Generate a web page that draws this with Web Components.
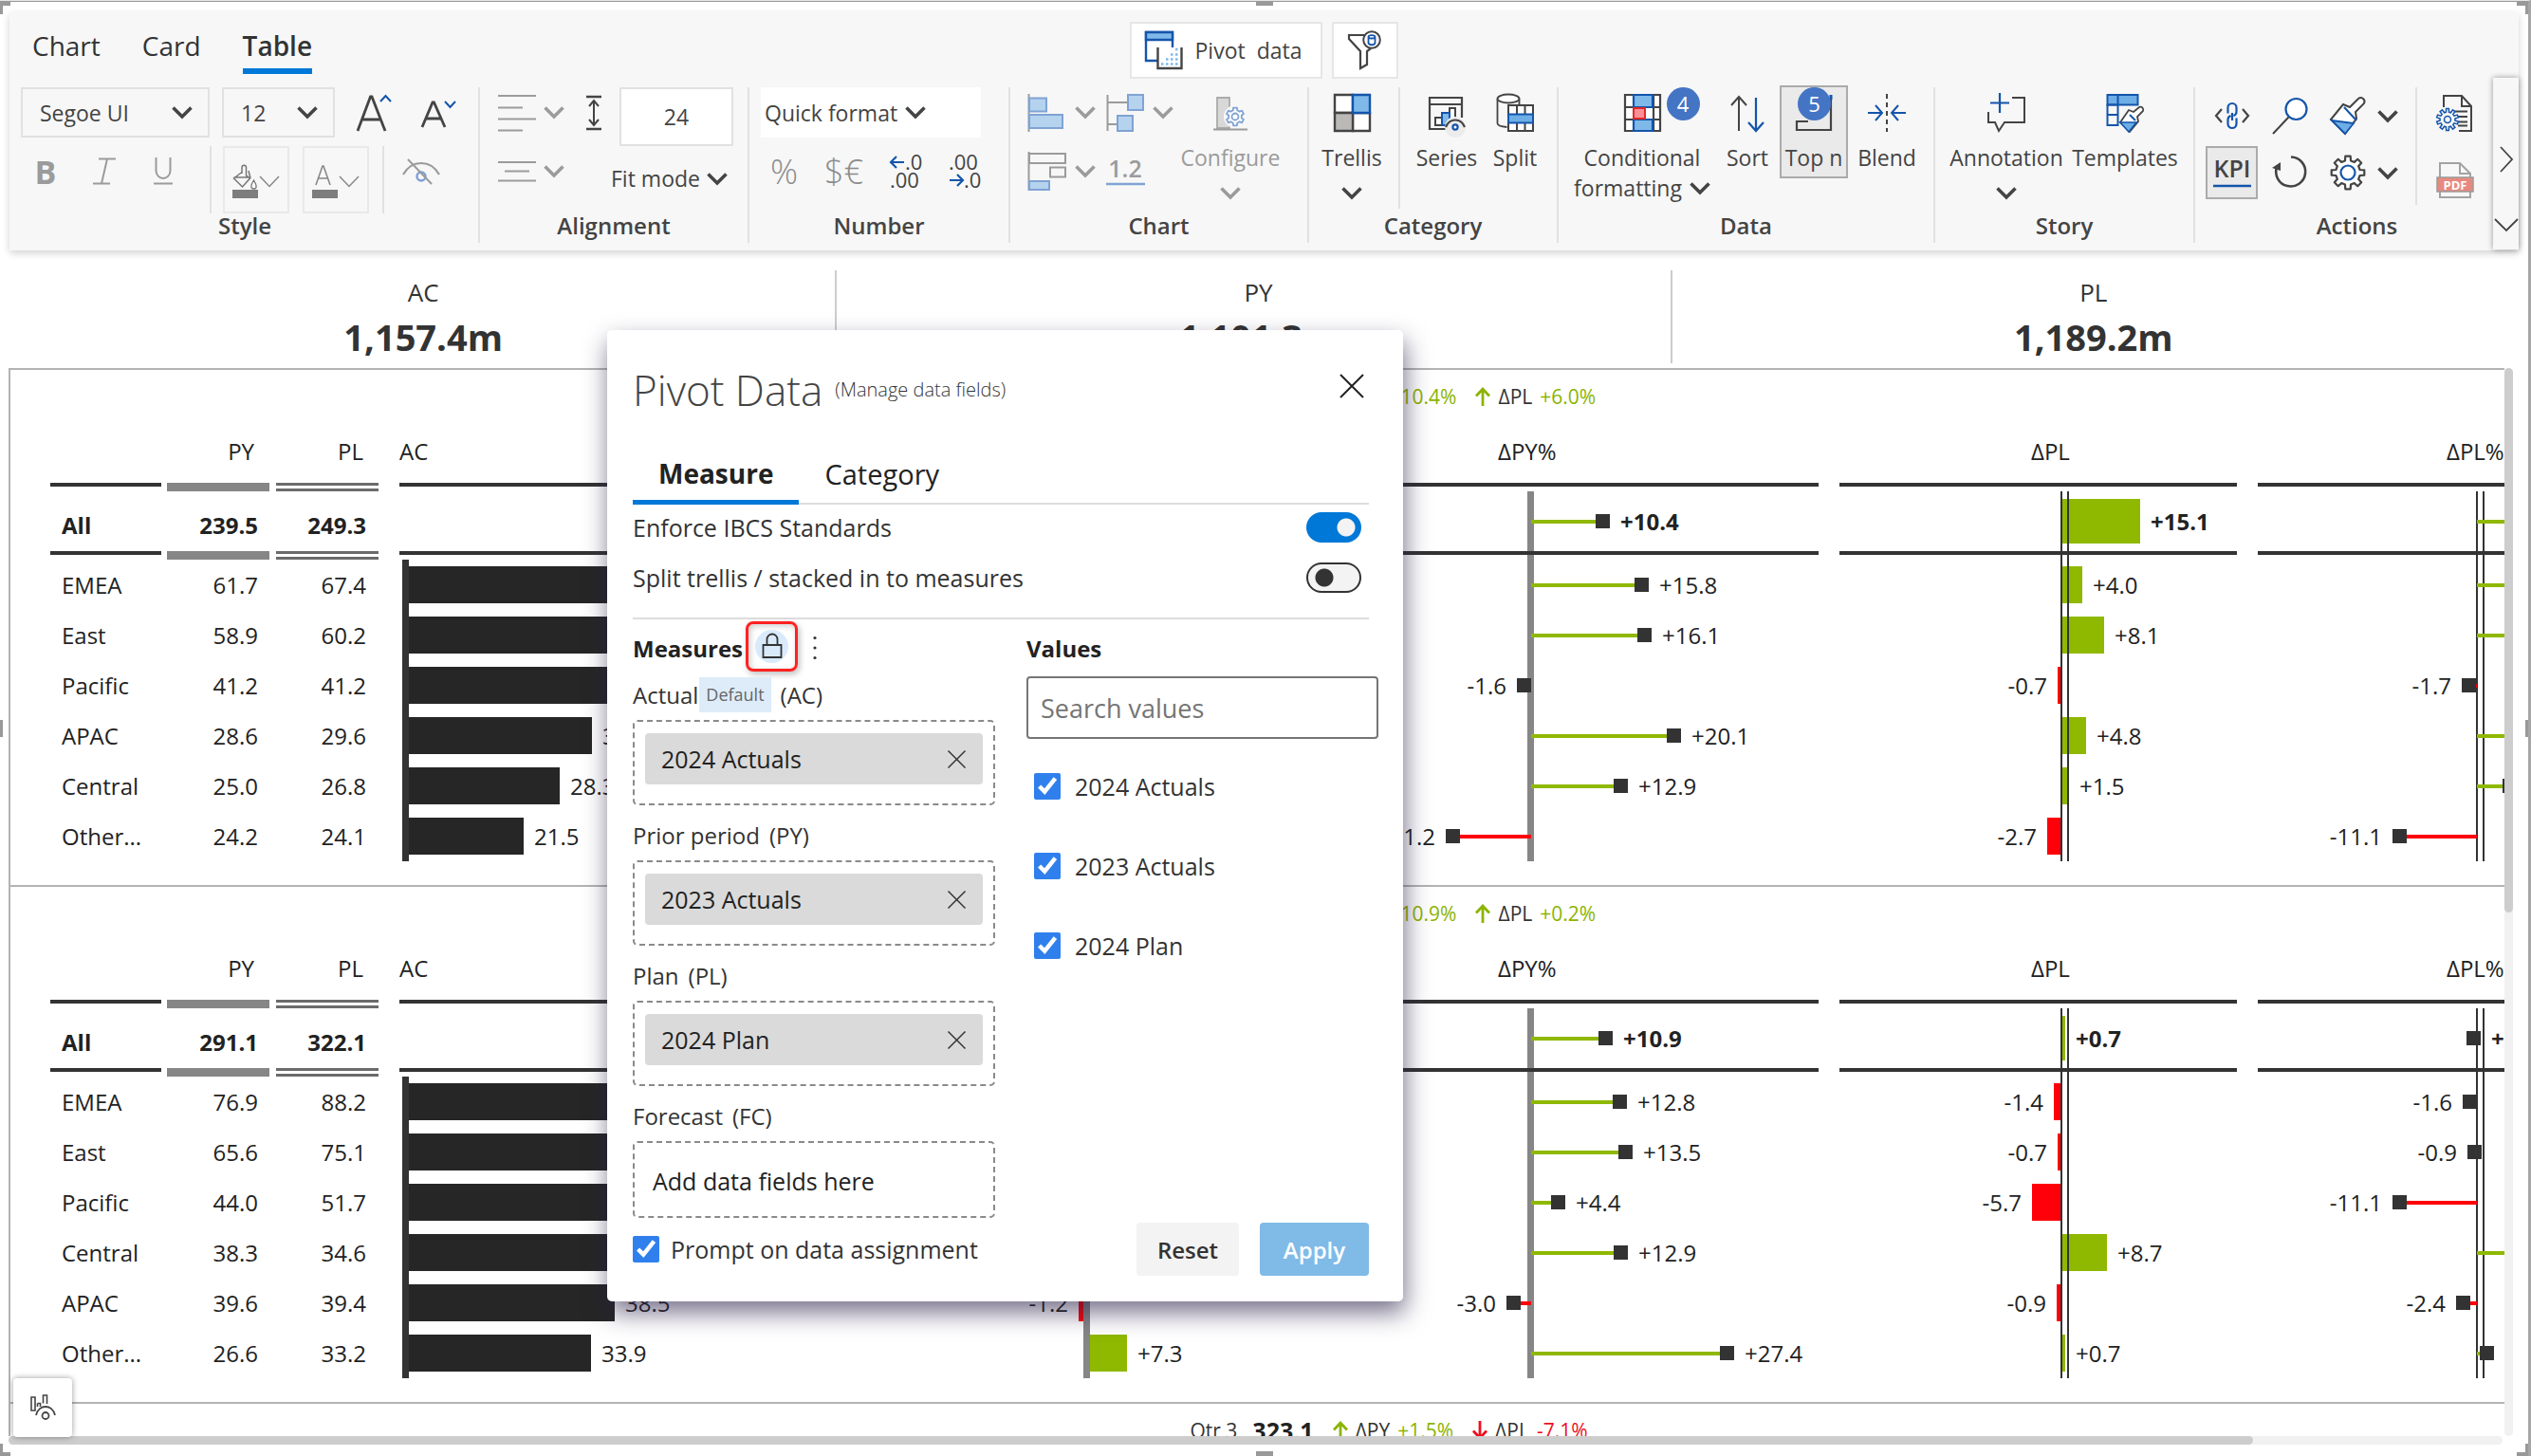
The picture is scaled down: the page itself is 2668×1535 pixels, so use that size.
<!DOCTYPE html>
<html lang="en">
<head>
<meta charset="utf-8">
<title>Pivot Data</title>
<style>
html, body { margin: 0; height: 100%; background: #fff; overflow: hidden; }
body { font-family: "Open Sans", "Noto Sans", sans-serif; font-size: 23px; color: #444; }
</style>
</head>
<body>
<report-app></report-app>
<script>
const BASE = `
*,*::before,*::after{box-sizing:border-box}
:host{box-sizing:border-box;display:block}
:host([hidden]){display:none}
button,input,select{font:inherit;color:inherit;margin:0;padding:0;border:0;background:none;border-radius:0}
button{cursor:pointer}
`;
function define(name, css, html, setup) {
  const tpl = document.createElement('template');
  if (typeof html === 'string') tpl.innerHTML = `<style>${BASE}${css}</style>${html}`;
  customElements.define(name, class extends HTMLElement {
    connectedCallback() {
      if (this.shadowRoot) return;
      const root = this.attachShadow({ mode: 'open' });
      if (typeof html === 'function') root.innerHTML = `<style>${BASE}${css}</style>${html(this)}`;
      else root.append(tpl.content.cloneNode(true));
      if (setup) setup(this, root);
    }
  });
}

/* ---------- icons ---------- */
const D = '#444', B = '#1455ab', L = '#7fb9ea', G = '#9b9b9b', P = '#b5d3ef', Q = '#7fa3d3';
const gear = (cx, cy, r, R, n) => {
  let d = '';
  for (let i = 0; i < n; i++) {
    const s = Math.PI * 2 / n, a = i * s - Math.PI / 2;
    [[r, -.3], [R, -.2], [R, .2], [r, .3]].forEach(([q, o], k) => {
      d += (i || k ? 'L' : 'M') + (cx + q * Math.cos(a + o * s)).toFixed(1) + ' ' + (cy + q * Math.sin(a + o * s)).toFixed(1);
    });
  }
  return d + 'Z';
};
const ICONS = {
  chev: [22, 13, `<path d="M1.500 1.500 11 11 20.500 1.500" fill="none" stroke="currentColor" stroke-width="3.600"/>`],
  thin: [22, 13, `<path d="M1 1 11 11.500 21 1" fill="none" stroke="currentColor" stroke-width="1.500"/>`],
  right: [14, 28, `<path d="M1 1 13 14 1 27" fill="none" stroke="#444" stroke-width="1.800"/>`],
  down: [26, 14, `<path d="M1 1 13 13 25 1" fill="none" stroke="#444" stroke-width="1.800"/>`],
  grow: [38, 40, `<path d="M2 39 15.500 3h1.500L31 39M7 27h19" fill="none" stroke="${D}" stroke-width="2.800"/><path d="M26 8l5.500-6L37 8" fill="none" stroke="${B}" stroke-width="2"/>`],
  shrink: [38, 32, `<path d="M2 31 13 5h1.500L26 31M6 22h16" fill="none" stroke="${D}" stroke-width="2.800"/><path d="M26 4l5.500 6L37 4" fill="none" stroke="${B}" stroke-width="2"/>`],
  italic: [24, 29, `<path d="M6 1.500h18M0 27.500h18M15 1.500 9 27.500" fill="none" stroke="${G}" stroke-width="2"/>`],
  under: [22, 29, `<path d="M3.500 0v14a7.500 8 0 0 0 15 0V0M1 27.500h20" fill="none" stroke="${G}" stroke-width="2"/>`],
  fill: [28, 36, `<path d="M10 10V3.500a2 2 0 0 1 4.500 0V12l4 3-8 9-9-9 8.500-6.500M1.500 14h17M17 7l2 8" fill="none" stroke="#777" stroke-width="1.500"/><path d="M22.500 17c-3 5-4 9 0 9s3-4 0-9z" fill="#fff" stroke="#777" stroke-width="1.300"/><path d="M0 27h27v9H0z" fill="#7d7d7d"/>`],
  color: [28, 36, `<path d="M4 22 11 2h1l7 20M7 15h9.500" fill="none" stroke="#888" stroke-width="1.600"/><path d="M0 27h27v9H0z" fill="#7d7d7d"/>`],
  eye: [40, 28, `<path d="M1 17C10 1 30 1 39 17" fill="none" stroke="${G}" stroke-width="2.200"/><circle cx="20" cy="19" r="4.500" fill="none" stroke="#7ba0d8" stroke-width="2.400"/><path d="M6 1 31 27" stroke="${G}" stroke-width="2"/>`],
  alignL: [40, 40, `<path d="M0 2h40M0 14.500h26M0 26.500h40M0 38.500h26" stroke="${G}" stroke-width="2.200"/>`],
  alignM: [40, 24, `<path d="M0 2h40M7 11.500h26M0 21.500h40" stroke="${G}" stroke-width="2.200"/>`],
  height: [18, 38, `<path d="M1 2h16M1 36h16" stroke="${D}" stroke-width="2.400"/><path d="M9 6v26M4 12l5-6 5 6M4 26l5 6 5-6" fill="none" stroke="${D}" stroke-width="2"/>`],
  dec1: [34, 38, `<path d="M1 9h14M7 3 1 9l6 6" fill="none" stroke="${B}" stroke-width="2.200"/><text x="16" y="17" font-size="22" font-weight="500" fill="${D}">.0</text><text x="0" y="36" font-size="22" font-weight="500" fill="${D}">.00</text>`],
  dec2: [34, 38, `<path d="M1 28h14M9 22l6 6-6 6" fill="none" stroke="${B}" stroke-width="2.200"/><text x="0" y="17" font-size="22" font-weight="500" fill="${D}">.00</text><text x="16" y="36" font-size="22" font-weight="500" fill="${D}">.0</text>`],
  bars: [40, 40, `<path d="M1.500 0v40" stroke="${G}" stroke-width="2"/><path d="M2 4.500h18v14H2zM2 22h35v14H2z" fill="${P}" stroke="${Q}" stroke-width="2"/>`],
  vari: [41, 40, `<path d="M1.500 1v38M2 9h21M2 32h10" stroke="${G}" stroke-width="2"/><path d="M23 1h16v16H23zM12 23h16v16H12z" fill="${P}" stroke="${Q}" stroke-width="2"/>`],
  stack: [42, 42, `<path d="M1.500 0v41" stroke="${G}" stroke-width="2"/><path d="M2 2h38v10H2zM24 16.500h16v10H24z" fill="none" stroke="${G}" stroke-width="2"/><path d="M2 31h21v9H2z" fill="${P}" stroke="${Q}" stroke-width="2"/>`],
  onetwo: [41, 32, `<text x="20" y="22" font-size="25" font-weight="600" text-anchor="middle" fill="${G}">1.2</text><path d="M0 29h41" stroke="${Q}" stroke-width="2.400"/>`],
  config: [36, 38, `<path d="M4 3h13v32H4z" fill="#d8d8d8" stroke="#aaa" stroke-width="1.800"/><path d="M0 36.500h36" stroke="${G}" stroke-width="1.800"/><circle cx="23" cy="23" r="12" fill="#f7f7f7"/><path d="${gear(23, 23, 7, 9.500, 6)}" fill="#fff" stroke="${Q}" stroke-width="1.800" stroke-linejoin="round"/><circle cx="23" cy="23" r="3.500" fill="none" stroke="${Q}" stroke-width="1.800"/>`],
  trellis: [41, 42, `<path d="M2 2h19v19H2zM21 21h18v19H21z" fill="#fff" stroke="#444" stroke-width="2.400"/><path d="M2 21h19v19H2z" fill="#bab9b6" stroke="#444" stroke-width="2.400"/><path d="M21 2h18v19H21z" fill="${L}" stroke="${B}" stroke-width="2.400"/>`],
  series: [39, 40, `<path d="M35 25V4H1v33h18M1 11h34" fill="none" stroke="${D}" stroke-width="2.200"/><path d="M7 25h7v8H7zM22 15h6v15h-6z" fill="#fff" stroke="${D}" stroke-width="2"/><path d="M14 20h8v13h-8z" fill="${L}" stroke="${B}" stroke-width="2"/><circle cx="28" cy="35" r="11" fill="#ececec"/><path d="M18 35c4-10 16-10 20 0" fill="none" stroke="${D}" stroke-width="2.200"/><circle cx="28" cy="35" r="2.600" fill="#fff" stroke="${B}" stroke-width="2.200"/>`],
  split: [40, 42, `<ellipse cx="13" cy="6" rx="11.500" ry="4.500" fill="#fff" stroke="${D}" stroke-width="1.800"/><path d="M1.500 6v26c0 2 4 3.500 10 4M24.500 6v7" fill="none" stroke="${D}" stroke-width="1.800"/><path d="M13 13h26v27H13zM22 13v27M30.500 13v27" fill="#fff" stroke="${D}" stroke-width="2"/><path d="M13 22.500h26v9H13z" fill="#6daee6" stroke="${B}" stroke-width="2"/>`],
  cond: [41, 42, `<path d="M2 2h37v38H2zM2 15h37M2 28h37M32 2v38" fill="#fff" stroke="${D}" stroke-width="2.200"/><path d="M11 2h20v13H11zM11 28h20v12H11z" fill="${L}" stroke="${B}" stroke-width="2.200"/><path d="M11 16h12v11H11z" fill="#ff8f96" stroke="#e02828" stroke-width="2"/>`],
  sort: [36, 42, `<path d="M9 40V5M1 13l8-9 8 9" fill="none" stroke="${D}" stroke-width="2"/><path d="M27 5v35M19 31l8 9 8-9" fill="none" stroke="${B}" stroke-width="2.200"/>`],
  topn: [40, 42, `<path d="M38 6v33H2V30h12" fill="none" stroke="${D}" stroke-width="2.200"/><path d="M38 2v5" stroke="${B}" stroke-width="3"/>`],
  blend: [40, 42, `<path d="M20 1v40" stroke="${D}" stroke-width="2" stroke-dasharray="5 4"/><path d="M0 21h15M8 13l7 8-7 8M40 21H25M32 13l-7 8 7 8" fill="none" stroke="${B}" stroke-width="2"/>`],
  annot: [41, 42, `<path d="M26 5h13v26H18l-6 9-4-9H1V20" fill="none" stroke="${D}" stroke-width="2"/><path d="M13 0v21M3 10.500h20" stroke="${B}" stroke-width="2.200"/>`],
  templ: [40, 42, `<path d="M1.500 2h32v10.500h-32z" fill="#6daee6" stroke="${B}" stroke-width="2"/><path d="M1.500 12.500h11V34h-11zM1.500 23h11M12.500 2v11" fill="none" stroke="${B}" stroke-width="2"/><path d="M15 31 24 18l5 2 6-5a3 3 0 0 1 4 4l-6 6 1 5-9 11z" fill="#fff" stroke="${D}" stroke-width="1.800"/><path d="M15 31h17l-8 10z" fill="#6daee6" stroke="${B}" stroke-width="1.600"/><path d="M25 23l6 6" stroke="${B}" stroke-width="2"/>`],
  link: [38, 30, `<path d="M8 8 2 15l6 7M30 8l6 7-6 7" fill="none" stroke="${D}" stroke-width="2.200"/><path d="M19 20v-8M14.500 12.500V6.500a4.500 4.500 0 0 1 9 0v4.500a4.500 4.500 0 0 1-3 4M23.500 17.500v6a4.500 4.500 0 0 1-9 0V19a4.500 4.500 0 0 1 3-4" fill="none" stroke="${B}" stroke-width="2.200"/>`],
  search: [38, 40, `<circle cx="25.500" cy="13" r="11" fill="#fff" stroke="${B}" stroke-width="2.200"/><path d="M17.500 21.500 1 39" stroke="${D}" stroke-width="2"/>`],
  brush: [38, 40, `<path d="M1 24 14 8l7 3 9-9a4 4 0 0 1 6 5l-9 9 1 7-12 16z" fill="#fff" stroke="${D}" stroke-width="2"/><path d="M2 25l23 3-9 11z" fill="#6daee6" stroke="${B}" stroke-width="1.800"/><path d="M15 11l13 14" stroke="${B}" stroke-width="2"/>`],
  kpi: [42, 34, `<text x="21" y="22" font-size="25" font-weight="600" text-anchor="middle" fill="${D}">KPI</text><path d="M1 31h40" stroke="${B}" stroke-width="2.400"/>`],
  refresh: [38, 38, `<path d="M20 2.500A15.500 15.500 0 1 1 5 13" fill="none" stroke="${D}" stroke-width="2.600"/><path d="M0 14 9 8v9z" fill="${D}"/>`],
  gear: [38, 38, `<path d="${gear(19, 19, 13, 17.500, 8)}" fill="#fff" stroke="${D}" stroke-width="2.200" stroke-linejoin="round"/><circle cx="19" cy="19" r="7.500" fill="#fff" stroke="${B}" stroke-width="2.200"/>`],
  docgear: [40, 40, `<path d="M8 14V2h19l10 11v26H24M27 2v11h10" fill="none" stroke="${D}" stroke-width="2"/><path d="M19 18.500h14M23 24h10M23 29.500h10M23 33.500h10" stroke="${D}" stroke-width="1.800"/><path d="${gear(12, 27, 8, 11.500, 10)}" fill="#f7f7f7" stroke="${B}" stroke-width="1.500"/><circle cx="12" cy="27" r="3.500" fill="none" stroke="${B}" stroke-width="1.500"/>`],
  pdf: [40, 40, `<path d="M4 38V2h21l11 11v25zM25 2v11h11" fill="#f7f7f7" stroke="#a3a3a3" stroke-width="2"/><path d="M1 17h38v15H1z" fill="#e8897f" stroke="#9a9a9a" stroke-width="1.500"/><text x="20" y="29.500" font-size="13" font-weight="700" text-anchor="middle" fill="#fff">PDF</text>`],
  pivot: [42, 42, `<path d="M2 2h28v30H2z" fill="#fff" stroke="${B}" stroke-width="2.400"/><path d="M2 2h28v8H2z" fill="${L}" stroke="${B}" stroke-width="2.400"/><path d="M14 18h28v24H14z" fill="#fff"/><path d="M14.500 18v22h25V18" fill="none" stroke="${D}" stroke-width="2.400"/><path d="M33 20h3M28 25.500h9M23 30.500h13M18 35.500h18" stroke="${L}" stroke-width="2.600" stroke-dasharray="2.500 2.500"/>`],
  funnel: [36, 42, `<path d="M17 5H1v4l12 13v18l7-4V22l4-3" fill="none" stroke="${D}" stroke-width="2.200"/><circle cx="25" cy="10" r="8.800" fill="#fff" stroke="${D}" stroke-width="2"/><path d="M21.500 7v6c0 3 7 3 7 0V7c0-2.500-7-2.500-7 0zc0 2 7 2 7 0" fill="none" stroke="${B}" stroke-width="1.800"/>`],
  close: [26, 26, `<path d="M1 1 25 25M25 1 1 25" stroke="#222" stroke-width="2"/>`],
  small: [19, 19, `<path d="M.5.5l18 18M18.500.5l-18 18" stroke="#333" stroke-width="1.500"/>`],
  lock: [22, 28, `<path d="M1.500 13h19v13h-19zM5.500 13V7a5.500 5.500 0 0 1 11 0v6" fill="none" stroke="#333" stroke-width="1.800"/>`],
  dots: [4, 26, `<circle cx="2" cy="2.500" r="1.600" fill="#333"/><circle cx="2" cy="13" r="1.600" fill="#333"/><circle cx="2" cy="23.500" r="1.600" fill="#333"/>`],
  up: [16, 20, `<path d="M8 20V2M1 9.500 8 2l7 7.500" fill="none" stroke="#8cb400" stroke-width="2.800"/>`],
  dn: [16, 20, `<path d="M8 0v18M1 10.500 8 18l7-7.500" fill="none" stroke="#ee0f1e" stroke-width="2.800"/>`],
  view: [28, 28, `<path d="M2 3h4v14H2zM8.500 9.500h3V13M14.500 9.500V1h4v9M8.500 13V9.500" fill="none" stroke="#444" stroke-width="1.600"/><path d="M7 22c3-12 17-12 20 0" fill="none" stroke="#444" stroke-width="1.800"/><circle cx="17" cy="22.500" r="3.500" fill="none" stroke="#444" stroke-width="1.800"/>`]
};
define('ui-icon', `:host{display:block;flex:none;line-height:0}svg{display:block;overflow:visible}`, el => {
  const [w, h, s] = ICONS[el.getAttribute('name')];
  return `<svg width="${w}" height="${h}" viewBox="0 0 ${w} ${h}" aria-hidden="true">${s}</svg>`;
});

/* ---------- ribbon parts ---------- */
define('ribbon-group', `
:host{display:flex;flex-direction:column;height:164px;min-width:0;border-left:2px solid #e1e1e1}
:host([first]){border-left-color:transparent}
.body{height:131px}
.name{line-height:30px;text-align:center;font-size:24px;font-weight:600;color:#444}`,
  el => `<div class="body"><slot></slot></div><div class="name">${el.getAttribute('label')}</div>`);

define('drop-select', `
:host{display:grid;align-items:center;color:#444}
:host([boxed]){border:2px solid #e1e1e1}
:host([white]){background:#fff}
select{appearance:none;grid-area:1/1;width:100%;height:100%;outline:0}
ui-icon{grid-area:1/1;justify-self:end;pointer-events:none}
:host{padding:0 var(--pr,16px) 0 var(--pl,18px)}`,
  el => `<select aria-label="${el.getAttribute('label')}"><option>${el.getAttribute('value')}</option></select><ui-icon name="chev"></ui-icon>`);

define('tool-button', `
:host{display:block;flex:none}
button{display:flex;flex-direction:column;align-items:center;width:100%;padding-top:6px;line-height:32px;position:relative;white-space:nowrap}
.pic{height:41px;display:flex;align-items:center;position:relative;margin-bottom:11px}
.line{display:flex;align-items:center;gap:8px}
.below{margin-top:15px}
b{position:absolute;left:var(--bx,46px);top:-6px;width:35px;height:35px;border-radius:50%;background:#4474c4;color:#fff;font-weight:400;text-align:center;line-height:35px;font-size:22px}
:host([on]) button{background:#eaeaea;box-shadow:0 0 0 2px #ababab;height:94px}
:host([muted]) button{color:#9b9b9b}`,
  el => {
    const a = n => el.getAttribute(n);
    return `<button type="button"><span class="pic"><ui-icon name="${a('icon')}"></ui-icon>${a('badge') ? `<b>${a('badge')}</b>` : ''}</span>
<span>${a('label')}</span>${a('more') ? `<span class="line">${a('more')}<ui-icon name="chev"></ui-icon></span>` : ''}${el.hasAttribute('menu') ? '<ui-icon class="below" name="chev"></ui-icon>' : ''}</button>`;
  });

const tb = (icon, label, style, rest = '') => `<tool-button icon="${icon}" label="${label}" style="${style}" ${rest}></tool-button>`;
const ib = (icon, title, cls = '') => `<button type="button" class="ib ${cls}" aria-label="${title}"><ui-icon name="${icon}"></ui-icon></button>`;

define('app-ribbon', `
:host{background:#f7f7f7;height:251px;margin:0 13px 0 10px;position:relative;box-shadow:0 3px 8px rgba(0,0,0,.18)}
.top{display:grid;grid-template-columns:1fr auto 1fr;height:79px}
nav{display:flex;gap:44px;padding-left:24px;font-size:28px;color:#333}
nav button{height:65px;padding-top:10px;border-bottom:6px solid transparent}
nav button[aria-selected=true]{font-weight:600;border-color:#0078d7}
.mid{display:flex;gap:10px;padding-top:10px}
.mid button{height:60px;background:#fff;border:2px solid #e6e6e6;display:flex;align-items:center;gap:12px;padding:0 20px 0 13px;white-space:pre}
.mid button+button{padding:0 15px}
.groups{display:grid;grid-template-columns:494fr 284fr 275fr 315fr 263fr 397fr 274fr 343fr}
.row{display:flex;align-items:center}
.r1{height:53px}
.r2{height:53px;margin-top:9px}
.ib{display:flex;align-items:center;justify-content:center;flex:none}
.g{color:#9b9b9b}.d{color:#444}
.s{width:2px;height:71px;background:#e1e1e1;align-self:flex-start}
.w62{width:62px}
.bold{font-weight:700;font-size:34px;line-height:1;color:#9b9b9b}
.light{font-weight:300;font-size:36px;line-height:1;color:#8c8c8c}
.num{width:120px;height:62px;background:#fff;border:2px solid #e1e1e1;text-align:center;align-self:flex-start;margin-left:18px}
.big{display:flex;align-items:flex-start}
.kpi{width:55px;height:56px;background:#eaeaea;border:2px solid #ababab}
.acts{display:grid;grid-template-columns:55px 60px 54px 22px;column-gap:4px;align-items:center;justify-items:center;padding-left:11px}
.acts>*{height:60px}
.acts .kpi{height:56px}
.grow{margin-left:22px}.shrink{margin-left:30px}
.row .box{width:70px;height:71px;border:2px solid #e9e9e9;padding-top:3px;align-self:flex-start;color:#888}
.doc{height:54px}.doc+.doc{margin-top:17px}
.strip{position:absolute;right:0;top:69px;width:27px;height:181px;background:#f7f7f7;box-shadow:0 0 6px rgba(0,0,0,.4);display:flex;flex-direction:column;align-items:center}
.strip button{height:60px}
.strip button:first-child{margin-top:60px}
.strip button:last-child{margin-top:18px}
`, `
<div class="top">
 <nav role="tablist"><button role="tab">Chart</button><button role="tab">Card</button><button role="tab" aria-selected="true">Table</button></nav>
 <div class="mid"><button type="button"><ui-icon name="pivot"></ui-icon><span>Pivot  data</span></button><button type="button" aria-label="Filter"><ui-icon name="funnel"></ui-icon></button></div>
</div>
<div class="groups">
 <ribbon-group first label="Style">
  <div class="row r1" style="padding-left:10px">
   <drop-select boxed label="Font" value="Segoe UI" style="width:199px;height:53px"></drop-select>
   <drop-select boxed label="Size" value="12" style="width:119px;height:53px;margin-left:13px"></drop-select>
   ${ib('grow', 'Increase font size', 'grow')}${ib('shrink', 'Decrease font size', 'shrink')}
  </div>
  <div class="row r2" style="padding-left:5px">
   <button class="ib w62 bold">B</button>${ib('italic', 'Italic', 'w62')}${ib('under', 'Underline', 'w62')}
   <i class="s" style="margin:0 12px 0 18px"></i>
   <button type="button" class="ib box" aria-label="Fill colour"><ui-icon name="fill"></ui-icon><ui-icon name="thin"></ui-icon></button>
   <button type="button" class="ib box" aria-label="Font colour" style="margin-left:14px"><ui-icon name="color"></ui-icon><ui-icon name="thin"></ui-icon></button>
   <i class="s" style="margin:0 19px 0 14px"></i>
   ${ib('eye', 'Hide')}
  </div>
 </ribbon-group>
 <ribbon-group label="Alignment">
  <div class="row r1" style="padding-left:19px">
   ${ib('alignL', 'Horizontal align')}<ui-icon class="g" name="chev" style="margin:0 22px 0 8px"></ui-icon><ui-icon name="height"></ui-icon>
   <input class="num" aria-label="Row height" value="24">
  </div>
  <div class="row r2" style="padding-left:19px">
   ${ib('alignM', 'Vertical align')}<ui-icon class="g" name="chev" style="margin:0 49px 0 8px"></ui-icon>
   <drop-select label="Fit mode" value="Fit mode" style="width:123px;height:53px;padding:0;margin-top:15px"></drop-select>
  </div>
 </ribbon-group>
 <ribbon-group label="Number">
  <div class="row r1" style="padding-left:12px"><drop-select white label="Quick format" value="Quick format" style="width:232px;height:53px;--pl:4px;--pr:58px"></drop-select></div>
  <div class="row r2" style="padding-left:22px;gap:28px"><button class="ib light">%</button><button class="ib light">$€</button>${ib('dec1', 'More decimals')}${ib('dec2', 'Fewer decimals')}</div>
 </ribbon-group>
 <ribbon-group label="Chart">
  <div class="big">
   <div style="padding-left:18px;width:179px">
    <div class="row r1">${ib('bars', 'Bars')}<ui-icon class="g" name="chev" style="margin:0 11px 0 10px"></ui-icon>${ib('vari', 'Variance')}<ui-icon class="g" name="chev" style="margin-left:8px"></ui-icon></div>
    <div class="row r2">${ib('stack', 'Stacked')}<ui-icon class="g" name="chev" style="margin:0 11px 0 8px"></ui-icon>${ib('onetwo', 'Labels')}</div>
   </div>
   ${tb('config', 'Configure', 'width:106px', 'muted menu')}
  </div>
 </ribbon-group>
 <ribbon-group label="Category">
  <div class="big" style="padding-left:14px">${tb('trellis', 'Trellis', 'width:62px', 'menu')}<i class="s" style="height:128px;margin:0 16px 0 18px"></i>${tb('series', 'Series', 'width:66px')}${tb('split', 'Split', 'width:50px;margin-left:14px')}</div>
 </ribbon-group>
 <ribbon-group label="Data">
  <div class="big" style="padding-left:15px">${tb('cond', 'Conditional', 'width:146px', 'badge="4" more="formatting"')}
  ${tb('sort', 'Sort', 'width:46px;margin-left:15px')}
  ${tb('topn', 'Top n', 'width:68px;margin-left:13px;--bx:3px', 'on badge="5"')}
  ${tb('blend', 'Blend', 'width:60px;margin-left:13px')}</div>
 </ribbon-group>
 <ribbon-group label="Story">
  <div class="big" style="padding-left:15px">${tb('annot', 'Annotation', 'width:120px', 'menu')}${tb('templ', 'Templates', 'width:110px;margin-left:10px')}</div>
 </ribbon-group>
 <ribbon-group label="Actions">
  <div class="big">
   <div class="acts">
    ${ib('link', 'Link')}${ib('search', 'Search')}${ib('brush', 'Brush')}${ib('chev', 'Brush menu', 'd')}
    ${ib('kpi', 'KPI', 'kpi')}${ib('refresh', 'Reset')}${ib('gear', 'Settings')}${ib('chev', 'Settings menu', 'd')}
   </div>
   <i class="s" style="height:124px;margin:0 20px 0 18px"></i>
   <div>${ib('docgear', 'Page setup', 'doc')}${ib('pdf', 'Export', 'doc')}</div>
  </div>
 </ribbon-group>
</div>
<div class="strip"><button type="button" aria-label="Scroll right"><ui-icon name="right"></ui-icon></button><button type="button" aria-label="Expand"><ui-icon name="down"></ui-icon></button></div>
`);

/* ---------- KPI cards ---------- */
define('kpi-card', `
:host{text-align:center;color:#333;border-right:2px solid #ccc;padding:6px 0 0 10px;height:98px}
:host(:last-child){border-color:transparent}
.n{font-size:26px;line-height:34px}
.v{font-size:38px;font-weight:700;line-height:60px}`,
  el => `<div class="n">${el.getAttribute('label')}</div><div class="v">${el.getAttribute('value')}</div>`);

/* ---------- variance cell ---------- */
define('var-bar', `
:host{display:flex;align-items:center;position:relative;height:53px;white-space:nowrap;font-size:24px}
:host([total]){height:63px;font-weight:700}
.l,.r{display:flex;align-items:center;gap:11px}
.l{flex:none;justify-content:flex-end;width:var(--axis)}
.r{flex:none}
.bar{height:39px;background:var(--c);flex:none}
:host([total]) .bar{height:47px}
.pin{height:4px;background:var(--c);display:flex;align-items:center;flex:none}
.pin::after{content:"";width:15px;height:15px;background:#333;flex:none}
.r .pin{justify-content:flex-end}
.l .pin::after{order:-1}
.axis{position:absolute;top:0;bottom:0;left:calc(var(--axis) - 4px);width:7px;pointer-events:none}
:host([total]) .axis{bottom:-9px}
.ac{background:#333;left:3px}
.py{background:#868686}
.pl{border:solid #333;border-width:0 2px;width:9px;left:calc(var(--axis) - 1px)}
.under{z-index:-1}`,
  el => {
    const k = el.getAttribute('kind'), v = parseFloat(el.getAttribute('value')), t = el.getAttribute('text') || '';
    const pin = el.hasAttribute('pin'), neg = v < 0;
    const w = Math.round(Math.abs(v) * (k === 'ac' ? 5.62 : pin ? 7.75 : 5.5) + (pin ? (neg ? 3 : 2) : k === 'py' ? 2 : 0));
    const c = k === 'ac' ? '#262626' : neg ? '#ff000a' : '#8fb800';
    const bar = `<span class="${pin ? 'pin' : 'bar'}" style="width:${w}px;--c:${c}"></span>`;
    const txt = t ? `<span>${t}</span>` : '';
    const ax = k === 'ac' && el.hasAttribute('total') ? '' : `<i class="axis ${k} ${pin ? 'under' : ''}"></i>`;
    if (isNaN(v)) return `<span class="l"></span>${ax}`;
    return `<span class="l">${neg ? txt + bar : ''}</span><span class="r">${neg ? '' : bar + txt}</span>${ax}`;
  });

/* ---------- quarter panel ---------- */
const QUARTERS = {
  q1: { head: ['Qtr 1', '264.4', 'up', '+10.4%', 'up', '+6.0%'], rows: [
    ['All', '239.5', '249.3', null, null, 10.4, 15.1, [6.9, '']],
    ['EMEA', '61.7', '67.4', [71.4, ''], null, 15.8, 4.0, [6, '']],
    ['East', '58.9', '60.2', [68.3, ''], null, 16.1, 8.1, [13, '']],
    ['Pacific', '41.2', '41.2', [40.5, ''], null, -1.6, -0.7, [-1.7, '-1.7']],
    ['APAC', '28.6', '29.6', [34.4, '34.3'], null, 20.1, 4.8, [16, '']],
    ['Central', '25.0', '26.8', [28.3, '28.3'], null, 12.9, 1.5, [5.1, '']],
    ['Other...', '24.2', '24.1', [21.5, '21.5'], null, -11.2, -2.7, [-11.1, '-11.1']]] },
  q2: { head: ['Qtr 2', '322.8', 'up', '+10.9%', 'up', '+0.2%'], rows: [
    ['All', '291.1', '322.1', null, null, 10.9, 0.7, [0.2, '+0.2']],
    ['EMEA', '76.9', '88.2', [86.8, ''], null, 12.8, -1.4, [-1.6, '-1.6']],
    ['East', '65.6', '75.1', [74.4, ''], null, 13.5, -0.7, [-0.9, '-0.9']],
    ['Pacific', '44.0', '51.7', [46, ''], null, 4.4, -5.7, [-11.1, '-11.1']],
    ['Central', '38.3', '34.6', [43.3, ''], null, 12.9, 8.7, [25, '']],
    ['APAC', '39.6', '39.4', [38.7, '38.5'], [-1.2, '-1.2'], -3.0, -0.9, [-2.4, '-2.4']],
    ['Other...', '26.6', '33.2', [34.1, '33.9'], [7.3, '+7.3'], 27.4, 0.7, [2.1, '']]] },
  q3: { head: ['Qtr 3', '323.1', 'up', '+1.5%', 'dn', '-7.1%'], rows: [] }
};
const fmt = v => (v > 0 ? '+' : '') + v.toFixed(1);
define('quarter-panel', `
:host{border-top:2px solid #b3b3b3;height:545px;padding-left:42px;font-size:24px;color:#222;isolation:isolate}
h2{display:flex;align-items:center;justify-content:center;gap:8px;height:55px;margin:0 0 0 -42px;font-size:21px;font-weight:400;color:#333}
h2 b{font-size:25px;margin:0 12px 0 8px;color:#222}
.up{color:#8cb400}.dn{color:#ee0f1e}
h2 .p1{margin-right:12px}
table{border-collapse:collapse;table-layout:fixed;width:2827px}
th,td{padding:0;font-weight:400;text-align:left;vertical-align:top}
.t{line-height:53px;height:53px}
thead .t{height:64px;line-height:62px}
.total .t{font-weight:700;height:63px;line-height:72px}
.lab{padding-left:12px}
.n{text-align:right;padding-right:19px}
.n.pl{padding-right:35px}
thead .n{padding-right:23px}
thead .n.pl{padding-right:38px}
.rule{height:9px;margin-right:22px;border-top:4px solid #333;position:relative}
.rl{margin-right:6px}
.ry{margin-right:7px;border-top:9px solid #868686}
.rp{border-top:3px solid #6b6b6b;border-bottom:3px solid #6b6b6b}
.x{padding-left:179px}.y{padding-left:202px}.z{padding-left:199px}`,
  el => {
    const q = QUARTERS[el.getAttribute('quarter')], h = q.head;
    const R = c => `<div class="rule ${c}"></div>`;
    const head = `<h2><span>${h[0]}</span><b>${h[1]}</b><ui-icon name="${h[2]}"></ui-icon><span>ΔPY</span><span class="${h[2]} p1">${h[3]}</span><ui-icon name="${h[4]}"></ui-icon><span>ΔPL</span><span class="${h[4]}">${h[5]}</span></h2>`;
    if (!q.rows.length) return head;
    const row = (r, i) => {
      const tot = !i ? 'total' : '', rr = c => i ? '' : R(c);
      const vb = (kind, axis, d, pin) => `<td><var-bar kind="${kind}" ${tot} ${pin ? 'pin' : ''} style="--axis:${axis}px" value="${d ? d[0] : ''}" text="${d ? d[1] : ''}"></var-bar>${rr('')}</td>`;
      return `<tr class="${tot}"><th scope="row"><div class="t lab">${r[0]}</div>${rr('rl')}</th>
<td><div class="t n">${r[1]}</div>${rr('ry')}</td><td><div class="t n pl">${r[2]}</div>${rr('rp')}</td>
${vb('ac', 10, r[3])}${vb('py', 166, r[4])}${vb('py', 214, [r[5], fmt(r[5])], 1)}${vb('pl', 234, [r[6], fmt(r[6])])}${vb('pl', 231, r[7], 1)}</tr>`;
    };
    return head + `<table><colgroup>${[123, 115, 130, 559, 420, 539, 441, 500].map(w => `<col style="width:${w}px">`).join('')}</colgroup>
<thead><tr><th><div class="t"></div>${R('rl')}</th><th><div class="t n">PY</div>${R('ry')}</th><th><div class="t n pl">PL</div>${R('rp')}</th><th><div class="t">AC</div>${R('')}</th><th><div class="t"></div>${R('')}</th><th><div class="t x">ΔPY%</div>${R('')}</th><th><div class="t y">ΔPL</div>${R('')}</th><th><div class="t z">ΔPL%</div>${R('')}</th></tr></thead>
<tbody>${q.rows.map(row).join('')}</tbody></table>`;
  });

/* ---------- dialog ---------- */
define('measure-field', `
:host{color:#333;font-size:24px}
.lab{display:flex;align-items:center;height:38px;gap:10px}
.tag{background:#deecf9;color:#666;font-size:18px;line-height:37px;padding:0 7px;margin:0 0 0 -9px}
.drop{margin-top:8px;border:2px dashed #8a8a8a;border-radius:5px;height:90px;padding:12px 11px;font-size:25px}
.chip{display:flex;align-items:center;justify-content:space-between;height:54px;background:#dadada;border-radius:4px;padding:0 18px 0 17px;color:#222}
.chip button{padding:4px 0}
.empty{height:81px;padding:0 19px;line-height:80px;color:#222}`,
  el => {
    const a = n => el.getAttribute(n);
    return `<div class="lab"><span>${a('label')}</span>${a('tag') ? `<span class="tag">${a('tag')}</span>` : ''}<span>${a('code')}</span></div>
${a('value') ? `<div class="drop"><div class="chip"><span>${a('value')}</span><button type="button" aria-label="Remove"><ui-icon name="small"></ui-icon></button></div></div>` : '<div class="drop empty">Add data fields here</div>'}`;
  });

define('check-item', `
label{display:flex;align-items:center;gap:var(--gap,15px);font-size:25px;color:#333;white-space:nowrap}
input{width:28px;height:28px;accent-color:#2f80ed;flex:none}`,
  `<label><input type="checkbox" checked><span><slot></slot></span></label>`);

define('toggle-row', `
label{display:flex;align-items:center;justify-content:space-between;height:46px;font-size:25px;color:#333}
input{appearance:none;width:58px;height:32px;border-radius:16px;border:2px solid #333;background:radial-gradient(circle at 17px 14px,#333 9px,#f3f3f3 10px)}
input:checked{border-color:#0078d7;background:radial-gradient(circle at 40px 14px,#f3f3f3 9px,#0078d7 10px)}`,
  el => `<label><span><slot></slot></span><input type="checkbox" role="switch" ${el.hasAttribute('on') ? 'checked' : ''}></label>`);

define('pivot-dialog', `
:host{position:absolute;left:640px;top:347px;width:839px;z-index:3;background:#fff;border-radius:5px;box-shadow:2px 12px 26px 0 rgba(40,30,70,.62);padding:0 26px 27px 27px;color:#222}
header{display:flex;align-items:center;height:119px;padding:6px 15px 0 0}
h1{margin:0 13px 0 0;font-size:44px;font-weight:300;color:#444}
.sub{font-size:20px;font-weight:300;flex:1;color:#333}
header button{margin-top:-8px}
.in{margin-right:10px}
.tabs{display:flex;height:65px;border-bottom:2px solid #ddd;font-size:29px}
.tabs button{height:65px;padding:4px 27px 0;border-bottom:5px solid transparent}
.tabs button[aria-selected=true]{font-weight:700;font-size:28px;border-color:#0078d7}
.rows{display:flex;flex-direction:column;gap:7px;padding:1px 8px 19px 0;border-bottom:2px solid #ddd}
.cols{display:grid;grid-template-columns:382px 371px;column-gap:33px}
h3{display:flex;align-items:center;margin:0;height:60px;font-size:24px;font-weight:700}
.lock{width:55px;height:53px;border:3px solid #f22;border-radius:8px;margin:-4px 16px 0 3px;display:flex;align-items:center;justify-content:center;box-shadow:2px 3px 6px rgba(0,0,0,.25),inset 2px 2px 6px rgba(0,0,0,.2)}
.lock span{width:35px;height:35px;border-radius:50%;background:#d9ebfb;display:flex;align-items:center;justify-content:center}
.fields{display:flex;flex-direction:column;gap:12px}
.q{width:100%;height:66px;border:2px solid #767676;border-radius:4px;padding:0 13px;font-size:27px}
.q::placeholder{color:#757575;opacity:1}
.vals{padding:8px 0 0 8px}
.vals check-item{height:84px;display:flex;align-items:center}
footer{display:flex;align-items:center;gap:22px;margin-top:5px}
footer check-item{flex:1;--gap:12px}
footer button{height:56px;width:108px;background:#f3f3f3;border-radius:4px;font-weight:600;font-size:24px;color:#333}
footer .p{width:115px;background:#80bae7;color:#fff}`, `
<header><h1>Pivot Data</h1><span class="sub">(Manage data fields)</span><button type="button" aria-label="Close"><ui-icon name="close"></ui-icon></button></header>
<div class="in">
 <div class="tabs" role="tablist"><button role="tab" aria-selected="true">Measure</button><button role="tab">Category</button></div>
 <div class="rows"><toggle-row on>Enforce IBCS Standards</toggle-row><toggle-row>Split trellis / stacked in to measures</toggle-row></div>
</div>
<div class="cols">
 <section><h3>Measures<button type="button" class="lock" aria-label="Lock"><span><ui-icon name="lock"></ui-icon></span></button><button type="button" aria-label="More"><ui-icon name="dots"></ui-icon></button></h3>
  <div class="fields">
   <measure-field label="Actual" tag="Default" code="(AC)" value="2024 Actuals"></measure-field>
   <measure-field label="Prior period" code="(PY)" value="2023 Actuals"></measure-field>
   <measure-field label="Plan" code="(PL)" value="2024 Plan"></measure-field>
   <measure-field label="Forecast" code="(FC)"></measure-field>
  </div></section>
 <section><h3>Values</h3><input class="q" type="search" aria-label="Search values" placeholder="Search values">
  <div class="vals"><check-item>2024 Actuals</check-item><check-item>2023 Actuals</check-item><check-item>2024 Plan</check-item></div></section>
</div>
<footer class="in"><check-item>Prompt on data assignment</check-item><button type="button">Reset</button><button type="button" class="p">Apply</button></footer>`);

/* ---------- page ---------- */
define('report-app', `
:host{display:flex;flex-direction:column;height:100vh;position:relative;border-top:1px solid #e6e6e6;border-right:3px solid #a6a6a6;overflow:hidden}
:host::before{content:"";height:1px;background:#999;flex:none;margin-bottom:11px}
app-ribbon{flex:none;margin-right:10px}
.kpis{display:grid;grid-template-columns:repeat(3,1fr);margin:21px 22px 5px 2px;height:98px;flex:none}
.board{flex:1;min-height:0;display:flex;margin-left:9px;margin-right:16px}
.view{flex:1;min-width:0;overflow:hidden;border-left:2px solid #b3b3b3}
.inner{width:2906px}
.v{width:9px;background:#f1f1f1;border-radius:5px}
.v i{display:block;height:51%;background:#cdcdcd;border-radius:5px}
.h{flex:none;height:9px;background:#f1f1f1;border-radius:5px;margin:0 27px 12px 9px}
.h i{display:block;height:9px;width:90%;background:#cdcdcd;border-radius:5px}
.float{position:absolute;left:14px;bottom:20px;width:62px;height:62px;background:#fff;border-radius:4px;box-shadow:0 0 6px rgba(0,0,0,.4);display:flex;align-items:center;justify-content:center;z-index:2}
.k{position:absolute;background:#999}
.tl{left:0;top:0;width:11px;height:5px}.tl2{left:0;top:0;width:3px;height:14px}
.tr{right:-3px;top:0;width:15px;height:5px}.tr2{right:-3px;top:0;width:6px;height:14px}
.tc{left:calc(50% - 9px);top:0;width:18px;height:5px}
.bc{left:calc(50% - 9px);bottom:0;width:18px;height:5px}
.ml{left:0;top:758px;width:3px;height:18px}.mr{right:-3px;top:758px;width:6px;height:18px}
.bl{left:0;bottom:0;width:11px;height:4px}.bl2{left:0;bottom:0;width:3px;height:13px}
.br{right:-3px;bottom:0;width:15px;height:4px}.br2{right:-3px;bottom:0;width:6px;height:13px}`, `
<app-ribbon></app-ribbon>
<div class="kpis"><kpi-card label="AC" value="1,157.4m"></kpi-card><kpi-card label="PY" value="1,101.3m"></kpi-card><kpi-card label="PL" value="1,189.2m"></kpi-card></div>
<div class="board"><div class="view"><div class="inner"><quarter-panel quarter="q1"></quarter-panel><quarter-panel quarter="q2"></quarter-panel><quarter-panel quarter="q3"></quarter-panel></div></div><div class="v"><i></i></div></div>
<div class="h"><i></i></div>
<button type="button" class="float" aria-label="View"><ui-icon name="view"></ui-icon></button>
<pivot-dialog></pivot-dialog>
${['tl', 'tl2', 'tr', 'tr2', 'tc', 'bc', 'ml', 'mr', 'bl', 'bl2', 'br', 'br2'].map(c => `<i class="k ${c}"></i>`).join('')}`);
</script>
</body>
</html>
